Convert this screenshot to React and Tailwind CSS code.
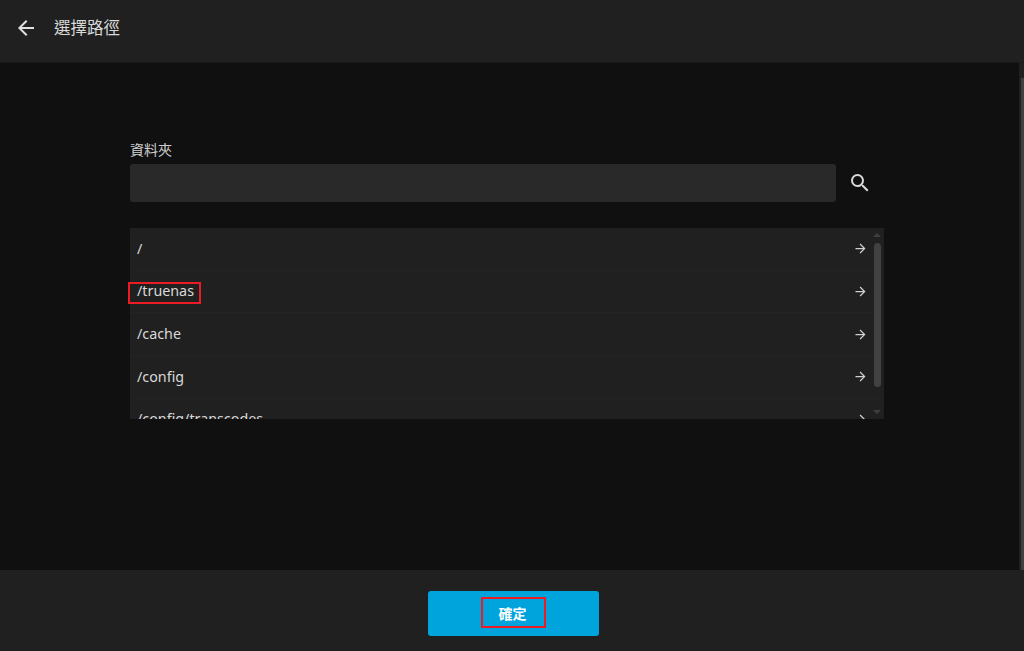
import React from 'react';
import { MdArrowBack, MdArrowForward, MdSearch } from 'react-icons/md';

const paths = ['/', '/truenas', '/cache', '/config', '/config/transcodes'];

function PathRow({ path }) {
  return (
    <div className="flex h-[42.67px] shrink-0 items-center justify-between border-b border-[#232323] pl-[7px] pr-[16px]">
      <span className="relative text-[14.3px] leading-5 text-[#d9d9d9]">
        {path}
        {/* annotation from the screenshot */}
        {path === '/truenas' && (
          <span className="absolute -left-[9px] -right-[7px] top-[1px] -bottom-[3px] border-2 border-[#ed1c24]" />
        )}
      </span>
      <MdArrowForward size={15} className="text-[#d0d0d0]" />
    </div>
  );
}

export default function App() {
  return (
    <div className="flex h-screen flex-col overflow-hidden bg-[#101010] font-['Noto_Sans','Noto_Sans_CJK_TC',sans-serif] text-[#d9d9d9]">
      {/* Header */}
      <header className="flex h-[63px] shrink-0 items-center gap-[16px] border-b border-[#1a1a1a] bg-[#202020] pb-[6px] pl-[14px]">
        <MdArrowBack size={24} className="text-[#e0e0e0]" />
        <h1 className="text-[16.5px] font-normal text-[#d9d9d9]">選擇路徑</h1>
      </header>

      {/* Body */}
      <div className="flex min-h-0 flex-1">
        <main className="flex-1 pl-[130px] pr-[135px] pt-[77px]">
          <label className="block h-[24px] text-[14px] leading-5 text-[#d0d0d0]">資料夾</label>
          <div className="flex items-center">
            <input className="h-[38px] w-[706px] rounded-[3px] bg-[#292929] outline-none" />
            <MdSearch size={24} className="ml-[12px] text-[#d9d9d9]" />
          </div>

          {/* Path list, clipped by clip-path so the red box can stick out on the left */}
          <div className="relative mt-[26px] flex h-[191px] w-[754px] flex-col bg-[#202020] [clip-path:inset(0_0_0_-2px)]">
            {paths.map((p) => (
              <PathRow key={p} path={p} />
            ))}
            {/* list scrollbar */}
            <div className="absolute inset-y-0 right-[3px] flex w-[8px] flex-col items-center">
              <div className="mt-[5px] h-0 w-0 border-x-[4px] border-b-[4px] border-x-transparent border-b-[#3f3f3f]" />
              <div className="mt-[6px] h-[144px] w-[7px] rounded-[4px] bg-[#414141]" />
              <div className="mt-[23px] h-0 w-0 border-x-[4px] border-t-[4px] border-x-transparent border-t-[#3f3f3f]" />
            </div>
          </div>
        </main>
        {/* page scrollbar */}
        <div className="flex w-[5px] shrink-0 flex-col bg-[#202020] pl-[2px] pt-[15px]">
          <div className="flex-1 bg-[#3f3f3f]" />
        </div>
      </div>

      {/* Footer */}
      <footer className="flex h-[81px] shrink-0 justify-center bg-[#202020] pl-[3px] pt-[21px]">
        <button className="flex h-[45px] w-[171px] items-center justify-center rounded-[3px] bg-[#00a4dc] pr-[2px] text-[14px] font-bold text-white">
          <span className="relative">
            確定
            <span className="absolute -left-[18px] -right-[19px] -top-[6px] -bottom-[4px] border-2 border-[#ed1c24]" />
          </span>
        </button>
      </footer>
    </div>
  );
}
